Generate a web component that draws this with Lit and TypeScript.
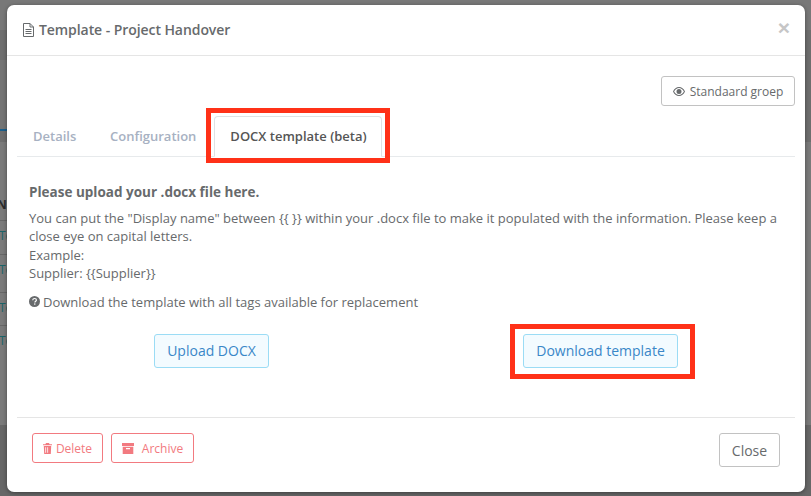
import { LitElement, html, css } from "lit";
import { customElement } from "lit/decorators.js";

@customElement("app-root")
export class AppRoot extends LitElement {
  static styles = css`
    :host { display: block; width: 811px; height: 496px; overflow: hidden; position: relative; font-family: "Open Sans", sans-serif; font-size: 13px; color: #676a6c;
      background: linear-gradient(to bottom, #787878 0, #787878 30px, #6e6e6e 30px, #6e6e6e 142px, #7a7a7a 142px, #7a7a7a 425px, #676767 425px); }
    * { box-sizing: border-box; }
    .leftband { position: absolute; left: 0; top: 60px; width: 7px; height: 69px; background: #747474; }
    .rblue { position: absolute; left: 0; top: 129px; width: 7px; height: 2px; background: #1a5f8c; }
    .bgline { position: absolute; left: 0; width: 7px; height: 1px; background: #666; }
    .bgtext { position: absolute; left: -1px; font-size: 12px; color: #1d6468; line-height: 14px; white-space: nowrap; }
    .bghead { position: absolute; left: -3px; font-size: 12px; font-weight: 700; color: #2b2b2b; line-height: 14px; }
    .modal { position: absolute; left: 7px; top: 5px; width: 798px; height: 487px; background: #fff; border-radius: 7px; display: flex; flex-direction: column; box-shadow: 0 1px 4px rgba(0,0,0,.4); }
    .header { height: 51px; flex: none; border-bottom: 1px solid #e5e5e5; display: flex; align-items: center; padding: 0 15px 1px 15px; }
    .title { display: flex; align-items: center; gap: 4px; font-size: 14px; font-weight: 600; color: #676a6c; letter-spacing: -0.07px; }
    .title svg { display: block; }
    .x { margin-left: auto; font-size: 21px; font-weight: 700; color: #c6c6c6; line-height: 18px; margin-top: -4px; font-family: "Liberation Sans", sans-serif; margin-right: 0; }
    .body { flex: 1; padding: 20px 10px 0 10px; display: flex; flex-direction: column; }
    .toolbar { display: flex; justify-content: flex-end; height: 30px; }
    .btn { display: inline-flex; align-items: center; justify-content: center; border: 1px solid #c2c2c2; border-radius: 3px; background: #fff; color: #676a6c; font-size: 12px; height: 30px; white-space: nowrap; }
    .std { width: 134px; gap: 5px; }
    .tabs { display: flex; margin-top: 10px; height: 41px; border-bottom: 1px solid #e7eaec; align-items: flex-end; }
    .tab { height: 40px; font-weight: 600; font-size: 13px; color: #a7b1c2; padding: 0 16px; display: flex; align-items: center; white-space: nowrap; }
    .tab.one { width: 77px; }
    .tab.two { width: 120px; padding: 0 16px; }
    .tab.active { width: 168px; margin-bottom: -1px; height: 41px; color: #555; background: #fff; border: 1px solid #dfe2e4; border-bottom: 1px solid #fff; border-radius: 4px 4px 0 0; justify-content: center; padding: 0 0 1px 1px; }
    .panel { padding: 26px 12px 0 12px; }
    h3 { margin: 0 0 8px 0; font-size: 13.5px; font-weight: 700; line-height: 18px; color: #676a6c; }
    .desc { margin: 0; font-size: 13px; line-height: 18.4px; }
    .hint { margin: 10px 0 0 0; display: flex; align-items: center; gap: 3px; line-height: 18px; font-size: 13px; }
    .actions { display: grid; grid-template-columns: 1fr 1fr; margin-top: 23px; }
    .cell { display: flex; justify-content: center; }
    .cell.l { padding-right: 12px; }
    .cell.r { padding-left: 12px; }
    .blue { height: 34px; border: 1px solid #9bdcf5; background: #f3fbff; color: #3a87c8; font-size: 14px; border-radius: 3px; }
    .up { width: 115px; }
    .down { width: 155px; }
    .footer { height: 75px; flex: none; border-top: 1px solid #e5e5e5; margin: 0 10px; display: flex; align-items: flex-start; padding: 15px 15px 0 15px; }
    .danger { color: #f27a80; border-color: #f27a80; height: 30px; font-size: 12px; gap: 4px; }
    .del { width: 71px; }
    .arc { width: 83px; gap: 8px; }
    .close { margin-left: auto; width: 61px; height: 34px; font-size: 14px; margin-right: 0; }
    .left { display: flex; gap: 8px; }
    .mark { position: absolute; border: 5px solid #ff3118; pointer-events: none; }
    .m1 { left: 206px; top: 108px; width: 184px; height: 55px; }
    .m2 { left: 510px; top: 324px; width: 185px; height: 55px; }
  `;

  render() {
    return html`
      <div class="leftband"></div>
      <div class="rblue"></div>
      <div class="bghead" style="top:198px">N</div>
      <div class="bgline" style="top:220px"></div>
      <div class="bgtext" style="top:229px">Te</div>
      <div class="bgline" style="top:254px"></div>
      <div class="bgtext" style="top:263px">Te</div>
      <div class="bgline" style="top:292px"></div>
      <div class="bgtext" style="top:301px">Te</div>
      <div class="bgline" style="top:325px"></div>
      <div class="bgtext" style="top:334px">Te</div>
      <div class="modal">
        <div class="header">
          <div class="title">
            <svg width="13" height="14" viewBox="0 0 13 14" fill="none" stroke="#676a6c" stroke-width="1">
              <path d="M1.500 .5h6.500l3.500 3.500v9.500h-10z M8 .5v3.500h3.500 M3.500 6.500h6 M3.500 8.500h6 M3.500 10.500h6" />
            </svg>
            <span>Template - Project Handover</span>
          </div>
          <span class="x">×</span>
        </div>
        <div class="body">
          <div class="toolbar">
            <div class="btn std">
              <svg width="12" height="9" viewBox="0 0 12 9">
                <path fill="#676a6c" d="M6 0C3.400 0 1.300 1.600 0 4.500 1.300 7.400 3.400 9 6 9s4.700-1.600 6-4.500C10.700 1.600 8.600 0 6 0zm0 1c2 0 3.700 1.300 4.900 3.500C9.700 6.700 8 8 6 8S2.300 6.700 1.100 4.500C2.300 2.300 4 1 6 1zm0 1a2.500 2.500 0 1 0 0 5 2.500 2.500 0 0 0 0-5z"/>
              </svg>
              <span>Standaard groep</span>
            </div>
          </div>
          <div class="tabs">
            <div class="tab one">Details</div>
            <div class="tab two">Configuration</div>
            <div class="tab active">DOCX template (beta)</div>
          </div>
          <div class="panel">
            <h3>Please upload your .docx file here.</h3>
            <p class="desc">You can put the "Display name" between {{ }} within your .docx file to make it populated with the information. Please keep a close eye on capital letters.<br />Example:<br />Supplier: {{Supplier}}</p>
            <div class="hint">
              <svg width="11" height="11" viewBox="0 0 11 11">
                <circle cx="5.500" cy="5.500" r="5.500" fill="#676a6c"/>
                <path d="M3.700 4.200c.1-1.100.9-1.700 1.900-1.700s1.800.6 1.800 1.500c0 1.300-1.500 1.300-1.500 2.500" fill="none" stroke="#fff" stroke-width="1.200"/>
                <rect x="5.100" y="7.400" width="1.300" height="1.300" fill="#fff"/>
              </svg>
              <span>Download the template with all tags available for replacement</span>
            </div>
            <div class="actions">
              <div class="cell l"><div class="btn blue up">Upload DOCX</div></div>
              <div class="cell r"><div class="btn blue down">Download template</div></div>
            </div>
          </div>
        </div>
        <div class="footer">
          <div class="left">
            <div class="btn danger del">
              <svg width="9" height="11" viewBox="0 0 9 11" fill="#f27a80">
                <path d="M3 0h3l.6 1.300H9v1H0v-1h2.400zM.8 3h7.400l-.4 8H1.200zm1.500 1.200v5.600h.8V4.200zm2 0v5.600h.8V4.200zm2 0v5.600h-.8V4.200z"/>
              </svg>
              <span>Delete</span>
            </div>
            <div class="btn danger arc">
              <svg width="12" height="11" viewBox="0 0 12 11" fill="#f27a80">
                <path d="M0 0h12v3H0zM.7 3.700h10.600V11H.7zM4 5v1.200h4V5z" fill-rule="evenodd"/>
              </svg>
              <span>Archive</span>
            </div>
          </div>
          <div class="btn close">Close</div>
        </div>
      </div>
      <div class="mark m1"></div>
      <div class="mark m2"></div>
    `;
  }
}
